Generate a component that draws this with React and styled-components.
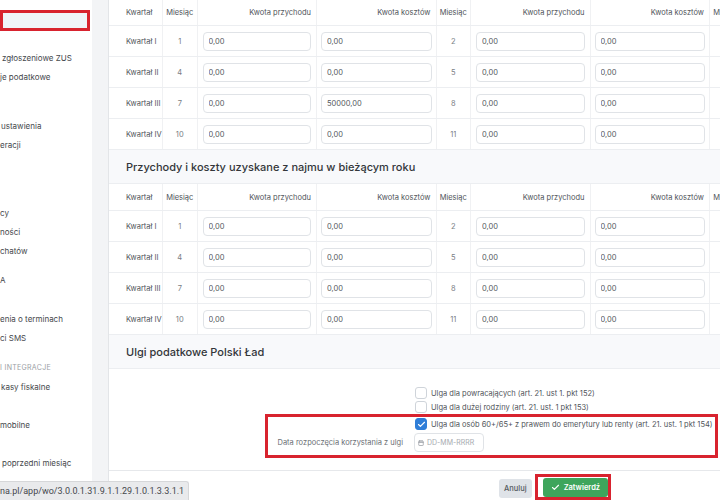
import React from "react";
import styled, { createGlobalStyle } from "styled-components";
import { Check, Calendar } from "lucide-react";

const GlobalStyle = createGlobalStyle`
  html, body { margin: 0; padding: 0; }
  body {
    font-family: Inter, "Noto Sans", "Liberation Sans", sans-serif;
    background: #ffffff;
  }
  * { box-sizing: border-box; }
`;

const Page = styled.div`
  position: relative;
  display: flex;
  width: 720px;
  height: 500px;
  overflow: hidden;
`;

const Sidebar = styled.div`
  width: 92px;
  flex-shrink: 0;
  background: #ffffff;
  overflow: hidden;
  white-space: nowrap;
  display: flex;
  flex-direction: column;
`;

const ActiveItem = styled.div`
  margin-top: 10px;
  width: 90px;
  height: 21px;
  border: 3px solid #d8232f;
  background: #f0f4f9;
`;

const NavItem = styled.div`
  height: 19px;
  line-height: 19px;
  margin-top: ${({ $gap }) => $gap || 0}px;
  padding-left: ${({ $indent }) => $indent || 0}px;
  font-size: ${({ $caption }) => ($caption ? "7px" : "8px")};
  color: ${({ $caption }) => ($caption ? "#9a9ea4" : "#45484c")};
  letter-spacing: ${({ $caption }) => ($caption ? "0.3px" : "0")};
  text-transform: ${({ $caption }) => ($caption ? "uppercase" : "none")};
`;

const Gutter = styled.div`
  width: 16px;
  flex-shrink: 0;
  background: #f3f4f6;
`;

const Main = styled.div`
  flex: 1;
  min-width: 0;
  background: #ffffff;
  border-left: 1px solid #e3e5e8;
  overflow: hidden;
`;

const Content = styled.div`
  margin-top: -1px;
`;

const Row = styled.div`
  display: grid;
  grid-template-columns: 54px repeat(3, 34.5px 119.5px 119.5px);
  height: ${({ $head }) => ($head ? 27 : 31)}px;
  border-bottom: 1px solid #eceef1;
  width: max-content;
`;

const Cell = styled.div`
  display: flex;
  align-items: center;
  justify-content: ${({ $align }) =>
    $align === "right" ? "flex-end" : $align === "center" ? "center" : "flex-start"};
  padding: ${({ $pad }) => $pad || "0"};
  border-right: 1px solid #f0f1f3;
  font-size: 7.5px;
  color: ${({ $muted }) => ($muted ? "#7a7e84" : "#50545a")};
  white-space: nowrap;
`;

const AmountInput = styled.input`
  width: 100%;
  height: 19px;
  border: 1px solid #e0e3e7;
  border-radius: 4px;
  padding: 0 5px;
  font-family: inherit;
  font-size: 7.5px;
  color: #55595e;
  background: #ffffff;
  outline: none;
`;

const Band = styled.div`
  height: 34px;
  display: flex;
  align-items: center;
  padding-left: 17px;
  background: #f8f9fb;
  border-bottom: 1px solid #eceef1;
  font-size: 11px;
  font-weight: 500;
  color: #33363a;
`;

const ReliefBody = styled.div`
  padding: 17px 0 12px;
`;

const FormRow = styled.div`
  display: grid;
  grid-template-columns: ${({ $label }) => $label}px 1fr;
  column-gap: 11px;
  align-items: center;
  min-height: 14px;
  margin-top: ${({ $gap }) => $gap || 0}px;
`;

const Highlight = styled.div`
  margin: 0 2px 0 156px;
  border: 3px solid #d8232f;
  padding-bottom: 3px;
`;

const FieldLabel = styled.div`
  text-align: right;
  font-size: 7.5px;
  color: #6b6f75;
  white-space: nowrap;
`;

const CheckLine = styled.label`
  display: flex;
  align-items: center;
  gap: 4px;
  padding-left: 1px;
  font-size: 7.5px;
  color: #50545a;
  white-space: nowrap;
`;

const Box = styled.span`
  width: 12px;
  height: 12px;
  flex-shrink: 0;
  border-radius: 3px;
  border: 1px solid ${({ $on }) => ($on ? "#2f7ed8" : "#cfd4da")};
  background: ${({ $on }) => ($on ? "#2f7ed8" : "#ffffff")};
  display: flex;
  align-items: center;
  justify-content: center;
  color: #ffffff;
`;

const DateField = styled.div`
  width: 70px;
  height: 19px;
  border: 1px solid #e0e3e7;
  border-radius: 4px;
  display: flex;
  align-items: center;
  gap: 3px;
  padding-left: 3px;
  font-size: 7px;
  color: #a6aab0;
`;

const Footer = styled.div`
  border-top: 1px solid #e6e8eb;
  display: flex;
  align-items: flex-start;
  padding: 3px 0 0 390px;
`;

const Button = styled.button`
  height: 19px;
  border: none;
  border-radius: 3px;
  padding: 0 ${({ $primary }) => ($primary ? 8 : 5)}px;
  margin-top: ${({ $primary }) => ($primary ? 0 : 5)}px;
  display: flex;
  align-items: center;
  gap: 4px;
  font-family: inherit;
  font-size: 7.5px;
  font-weight: ${({ $primary }) => ($primary ? 600 : 500)};
  color: ${({ $primary }) => ($primary ? "#ffffff" : "#555a60")};
  background: ${({ $primary }) => ($primary ? "#3ea55c" : "#dfe3e8")};
`;

const ButtonFrame = styled.div`
  margin-left: 3px;
  border: 3px solid #d8232f;
  padding: 1px 0 0 5px;
`;

const StatusUrl = styled.div`
  position: absolute;
  left: 0;
  bottom: 0;
  height: 19px;
  padding: 0 4px 0 0;
  display: flex;
  align-items: center;
  background: #e9eaec;
  border-top: 1px solid #d6d7d9;
  border-right: 1px solid #d6d7d9;
  border-top-right-radius: 3px;
  font-family: Roboto, "Liberation Sans", sans-serif;
  font-size: 9px;
  color: #45484c;
`;

const navItems = [
  { text: "zgłoszeniowe ZUS", gap: 17.5, indent: 2 },
  { text: "je podatkowe" },
  { text: "ustawienia", gap: 30, indent: 1 },
  { text: "eracji" },
  { text: "cy", gap: 49 },
  { text: "ności" },
  { text: "chatów" },
  { text: "A", gap: 10 },
  { text: "enia o terminach", gap: 20 },
  { text: "ci SMS" },
  { text: "I INTEGRACJE", gap: 10, caption: true },
  { text: "kasy fiskalne", gap: 1, indent: 1 },
  { text: "mobilne", gap: 19 },
  { text: "poprzedni miesiąc", gap: 19, indent: 2 },
];

const quarters = [
  { name: "Kwartał I", months: [1, 2, 3] },
  { name: "Kwartał II", months: [4, 5, 6] },
  { name: "Kwartał III", months: [7, 8, 9] },
  { name: "Kwartał IV", months: [10, 11, 12] },
];

const QuarterTable = ({ costs = {} }) => (
  <>
    <Row $head>
      <Cell $pad="0 0 0 17px">Kwartał</Cell>
      {[0, 1, 2].map((g) => (
        <React.Fragment key={g}>
          <Cell $align="center">Miesiąc</Cell>
          <Cell $align="right" $pad="0 5px 0 0">Kwota przychodu</Cell>
          <Cell $align="right" $pad="0 5px 0 0">Kwota kosztów</Cell>
        </React.Fragment>
      ))}
    </Row>
    {quarters.map((q) => (
      <Row key={q.name}>
        <Cell $pad="0 0 0 17px">{q.name}</Cell>
        {q.months.map((m) => (
          <React.Fragment key={m}>
            <Cell $align="center" $muted>{m}</Cell>
            <Cell $pad="0 5px 0 5px">
              <AmountInput readOnly value="0,00" />
            </Cell>
            <Cell $pad="0 4px 0 4px">
              <AmountInput readOnly value={costs[m] || "0,00"} />
            </Cell>
          </React.Fragment>
        ))}
      </Row>
    ))}
  </>
);

const Relief = ({ checked, children }) => (
  <CheckLine>
    <Box $on={checked}>{checked && <Check size={9} strokeWidth={3} />}</Box>
    {children}
  </CheckLine>
);

export default function App() {
  return (
    <>
      <GlobalStyle />
      <Page>
        <Sidebar>
          <ActiveItem />
          {navItems.map((item) => (
            <NavItem
              key={item.text}
              $gap={item.gap}
              $indent={item.indent}
              $caption={item.caption}
            >
              {item.text}
            </NavItem>
          ))}
        </Sidebar>
        <Gutter />
        <Main>
          <Content>
            <QuarterTable costs={{ 7: "50000,00" }} />
            <Band>Przychody i koszty uzyskane z najmu w bieżącym roku</Band>
            <QuarterTable />
            <Band>Ulgi podatkowe Polski Ład</Band>
            <ReliefBody>
              <FormRow $label={294}>
                <span />
                <Relief>Ulga dla powracających (art. 21. ust 1. pkt 152)</Relief>
              </FormRow>
              <FormRow $label={294}>
                <span />
                <Relief>Ulga dla dużej rodziny (art. 21. ust. 1 pkt 153)</Relief>
              </FormRow>
              <Highlight>
                <FormRow $label={135}>
                  <span />
                  <Relief checked>
                    Ulga dla osób 60+/65+ z prawem do emerytury lub renty (art. 21. ust. 1 pkt 154)
                  </Relief>
                </FormRow>
                <FormRow $label={135} $gap={2}>
                  <FieldLabel>Data rozpoczęcia korzystania z ulgi</FieldLabel>
                  <DateField>
                    <Calendar size={6} strokeWidth={3} color="#9a9ea4" />
                    DD-MM-RRRR
                  </DateField>
                </FormRow>
              </Highlight>
            </ReliefBody>
            <Footer>
              <Button>Anuluj</Button>
              <ButtonFrame>
                <Button $primary>
                  <Check size={9} strokeWidth={3} />
                  Zatwierdź
                </Button>
              </ButtonFrame>
            </Footer>
          </Content>
        </Main>
        <StatusUrl>na.pl/app/wo/3.0.0.1.31.9.1.1.29.1.0.1.3.3.1.1</StatusUrl>
      </Page>
    </>
  );
}
